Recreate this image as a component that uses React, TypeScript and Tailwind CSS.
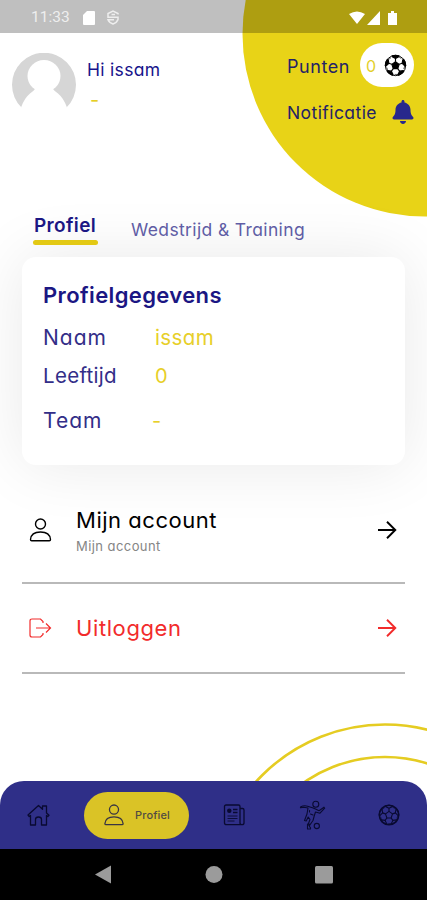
import React from "react";
import { FaBell } from "react-icons/fa";

const TURNS = [0, 72, 144, 216, 288];

function Ball({ className, filled }: { className: string; filled?: boolean }) {
  return (
    <svg viewBox="0 0 24 24" className={className} fill={filled ? "currentColor" : "none"} stroke="currentColor" strokeWidth="1.200" strokeLinejoin="round">
      <circle cx="12" cy="12" r="10.600" fill="none" strokeWidth={filled ? 1 : 1.7} />
      <path d="M12 8l3.800 2.800-1.450 4.400h-4.700L8.200 10.800z" />
      {TURNS.map((turn) => (
        <g key={turn} transform={`rotate(${turn} 12 12)`}>
          <path d="M12 8V4.500" />
          <path d="M12 4.700L8.600 2.900V1.900Q12 .8 15.400 1.900V2.900z" />
          <path d="M15.400 2.900L18.200 5" fill="none" strokeWidth=".6" />
        </g>
      ))}
    </svg>
  );
}

function Person({ className }: { className: string }) {
  return (
    <svg viewBox="0 0 22 24" className={className} fill="none" stroke="currentColor" strokeWidth="1.4">
      <circle cx="11" cy="6" r="5" />
      <path d="M1 21.500c.4-5 4.400-7.500 10-7.500s9.600 2.500 10 7.500c0 .8-.4 1.200-1.200 1.200H2.200C1.400 22.700 1 22.300 1 21.500z" />
    </svg>
  );
}

function Arrow() {
  return (
    <svg viewBox="0 0 20 20" className="mr-[8px] size-5" fill="none" stroke="currentColor" strokeWidth="1.9">
      <path d="M1 10h17M10 1.800l8.300 8.200-8.300 8.200" />
    </svg>
  );
}

function Header() {
  return (
    <header className="relative flex h-[167px] justify-between">
      <div className="flex pl-[11px] pt-[20px]">
        <svg viewBox="0 0 66 55" className="h-[55px] w-[66px]">
          <path d="M10.500 54A32 32 0 1 1 55.500 54z" fill="#d6d6d6" transform="translate(0 .5)" />
          <ellipse cx="33" cy="23" rx="16.500" ry="16" fill="#fff" />
          <path d="M25 34q-1 3-6 6.500-5.500 4.500-8.800 13.500v1h45.600v-1q-3.300-9-8.800-13.500-5-3.500-6-6.500z" fill="#fff" />
        </svg>
        <div className="ml-[10px] pt-[5px]">
          <p className="text-[17.500px] leading-6 tracking-[0.300px] text-[#17138b]">Hi issam</p>
          <p className="mt-[6px] pl-[3px] text-[20px] leading-6 text-[#e5ce25]">-</p>
        </div>
      </div>
      <div className="w-[140px] pt-[10px] text-[#242267]">
        <div className="flex h-[44px] items-center">
          <span className="w-[73px] pt-[3px] text-[18px] tracking-[0.550px]">Punten</span>
          <div className="flex h-[44px] w-[54px] items-center rounded-full bg-white pl-[6px]">
            <span className="w-[18px] pt-px text-[16px] text-[#e3cf2a]">0</span>
            <Ball filled className="size-[23px] text-black" />
          </div>
        </div>
        <div className="mt-[13px] flex h-[24px] items-center">
          <span className="w-[105px] pt-[3px] text-[17.500px] tracking-[0.430px]">Notificatie</span>
          <FaBell className="h-[24px] w-[22px] text-[#28288c]" />
        </div>
      </div>
    </header>
  );
}

function Nav() {
  return (
    <nav className="relative flex h-[68px] shrink-0 items-center rounded-t-[24px] bg-[#2f2f88] text-[#090a31]">
      <svg viewBox="0 0 24 24" className="ml-[26px] size-6" fill="none" stroke="currentColor" strokeWidth="1.300" strokeLinejoin="round">
        <path d="M2 12L12.500 2.500l4 3.700V3h4v7L23 12.300l-1.200 1.200-1.300-1.100V22h-5v-5.500q0-2.500-3-2.500t-3 2.500V22h-5v-9.600l-1.300 1.100z" />
      </svg>
      <div className="ml-[34px] flex h-[47px] w-[105px] items-center rounded-full bg-[#dac326] pl-[20px]">
        <Person className="h-[22px] w-[20px] text-[#393542]" />
        <span className="ml-[11px] text-[11px] font-medium tracking-[0.150px] text-[#514b42]">Profiel</span>
      </div>
      <svg viewBox="0 0 24 24" className="ml-[33px] size-6" fill="none" stroke="currentColor" strokeWidth="1.300">
        <path d="M4 2h12.500q1.500 0 1.500 1.500V20q0 1.700 2 1.700H4.500Q2.500 21.700 2.500 20V3.500Q2.500 2 4 2zM18 5.500h2.500q1.500 0 1.500 1.500v13q0 1.700-2 1.700M11 6.500h4.500M11 9.500h4.500" />
        <path d="M5.500 13h10M5.500 15.500h10M5.500 18h7" strokeWidth=".9" />
        <circle cx="7.300" cy="7.800" r="1.600" fill="currentColor" />
      </svg>
      <svg viewBox="0 0 28 30" className="ml-[52px] h-[30px] w-[28px]" fill="none" stroke="currentColor" strokeWidth="1.100" strokeLinejoin="round" strokeLinecap="round">
        <circle cx="17.800" cy="4.200" r="3" />
        <path d="M2.500 7q3.500-2 7-.8l5 1.600 3 1.200 3.500 1.700 5-3.500.7 1-4.700 5-4.500-1.200-1.300 4-1.200 4.500-3.500 5-1.500-.8 2-5.200-1.800-2.500-2 4-1.700-.5 2.500-6.500 1-6-4-.8-3.500.6z" />
        <path d="M11.500 10.500v1.500M12.500 14l2.500 1M9.500 24v5h3v-1.300l-1-1V24" />
        <circle cx="18.800" cy="26" r="2.600" />
      </svg>
      <Ball className="ml-[52px] size-[22px]" />
    </nav>
  );
}

export default function App() {
  return (
    <div className="relative flex h-[900px] w-[427px] flex-col overflow-hidden bg-white font-[Inter,sans-serif] [font-feature-settings:'cv11']">
      <svg viewBox="0 0 427 900" className="absolute inset-0 h-[900px] w-[427px]">
        <circle cx="425" cy="34" r="182.500" fill="#e8d317" />
        <g fill="none" stroke="#e5cc22" strokeWidth="2.600">
          <circle cx="385" cy="898.500" r="174" />
          <circle cx="385" cy="899" r="142" />
        </g>
      </svg>
      <div className="relative flex h-[33px] shrink-0 items-center bg-black/25 pt-[2px] text-white">
        <span className="ml-[31px] w-[52px] pt-px font-[Roboto,sans-serif] text-[15.500px] text-[#eeeeee]">11:33</span>
        <svg viewBox="0 0 12 14" className="h-[14px] w-[12px]"><path d="M4 0h7q1 0 1 1v12q0 1-1 1H1q-1 0-1-1V4z" fill="currentColor" /></svg>
        <svg viewBox="0 0 12 15" className="ml-[12px] h-[15px] w-[12px]" fill="none" stroke="#eeeeee" strokeWidth="1.500">
          <path d="M11 4.500V3.500L6 1 1 3.500v3.800h10v2.200Q10 12.500 6 14 2 12.500 1 9.800h6M4.500 4.500H8" />
        </svg>
        <svg viewBox="0 0 57 16" className="ml-[230px] h-4 w-[57px]" fill="currentColor">
          <path d="M0 4Q8-1 16 4L8 14zM18 15L31 1v14zM39 3h3V1h3v2h3v12h-9z" />
        </svg>
      </div>
      <Header />
      <main className="relative flex-1 px-[22px]">
        <div className="flex h-[57px] pl-[12px] pt-[12px]">
          <div className="w-[97px]">
            <p className="text-[19px] font-semibold leading-[28px] tracking-[0.350px] text-[#1c1784]">Profiel</p>
            <div className="-ml-px h-[5px] w-[65px] rounded-full bg-[#e3c914]" />
          </div>
          <p className="whitespace-nowrap pt-[5px] text-[17.500px] leading-[26px] tracking-[0.370px] text-[#605da5]">Wedstrijd &amp; Training</p>
        </div>
        <section className="h-[208px] rounded-[14px] bg-white pl-[21px] pt-[24px] text-[20px] shadow-[0_0_65px_rgba(0,0,0,0.09)]">
          <h2 className="text-[22px] font-semibold leading-7 tracking-[0.380px] text-[#1b1683]">Profielgegevens</h2>
          <dl className="text-[#332e88]">
            <div className="mt-[15px] flex leading-7"><dt className="w-[112px] text-[21px] tracking-[1px]">Naam</dt><dd className="text-[20.500px] tracking-[0.400px] text-[#e7cf29]">issam</dd></div>
            <div className="mt-[10px] flex leading-7"><dt className="w-[112px] text-[20.500px] tracking-[0.300px]">Leeftijd</dt><dd className="text-[#e7cf29]">0</dd></div>
            <div className="mt-[17px] flex leading-7"><dt className="w-[109px] text-[21px] tracking-[1px]">Team</dt><dd className="text-[#e7cf29]">-</dd></div>
          </dl>
        </section>
        <button className="flex h-[119px] w-full items-center border-b-2 border-[#b9b9b9] pt-[12px] text-left text-black">
          <Person className="ml-[7px] h-[24px] w-[23px]" />
          <div className="ml-[24px] flex-1 pt-[4px]">
            <p className="text-[22px] leading-7 tracking-[0.530px]">Mijn account</p>
            <p className="text-[13px] leading-6 tracking-[0.430px] text-[#858585]">Mijn account</p>
          </div>
          <Arrow />
        </button>
        <button className="flex h-[90px] w-full items-center border-b-2 border-[#b9b9b9] text-left text-[#f22b2b]">
          <svg viewBox="0 0 23 20" className="ml-[7px] h-5 w-[23px]" fill="none" stroke="currentColor" strokeWidth="1.200">
            <path d="M14 5V3.500L11.500 1H3Q1 1 1 3v14q0 2 2 2h8.500l2.500-2.500V15M7 10h14M17 5.500l4.500 4.500-4.500 4.500" />
          </svg>
          <span className="ml-[24px] flex-1 text-[22px] tracking-[0.600px]">Uitloggen</span>
          <Arrow />
        </button>
      </main>
      <Nav />
      <div className="relative flex h-[51px] shrink-0 items-center bg-black text-[#9b9b9b]">
        <svg viewBox="0 0 427 51" className="h-[51px] w-full" fill="currentColor">
          <path d="M95 25.500L111 16.500v18z" /><circle cx="214" cy="25.500" r="8.500" /><rect x="315" y="17" width="18" height="17.500" rx="1.500" />
        </svg>
      </div>
    </div>
  );
}
